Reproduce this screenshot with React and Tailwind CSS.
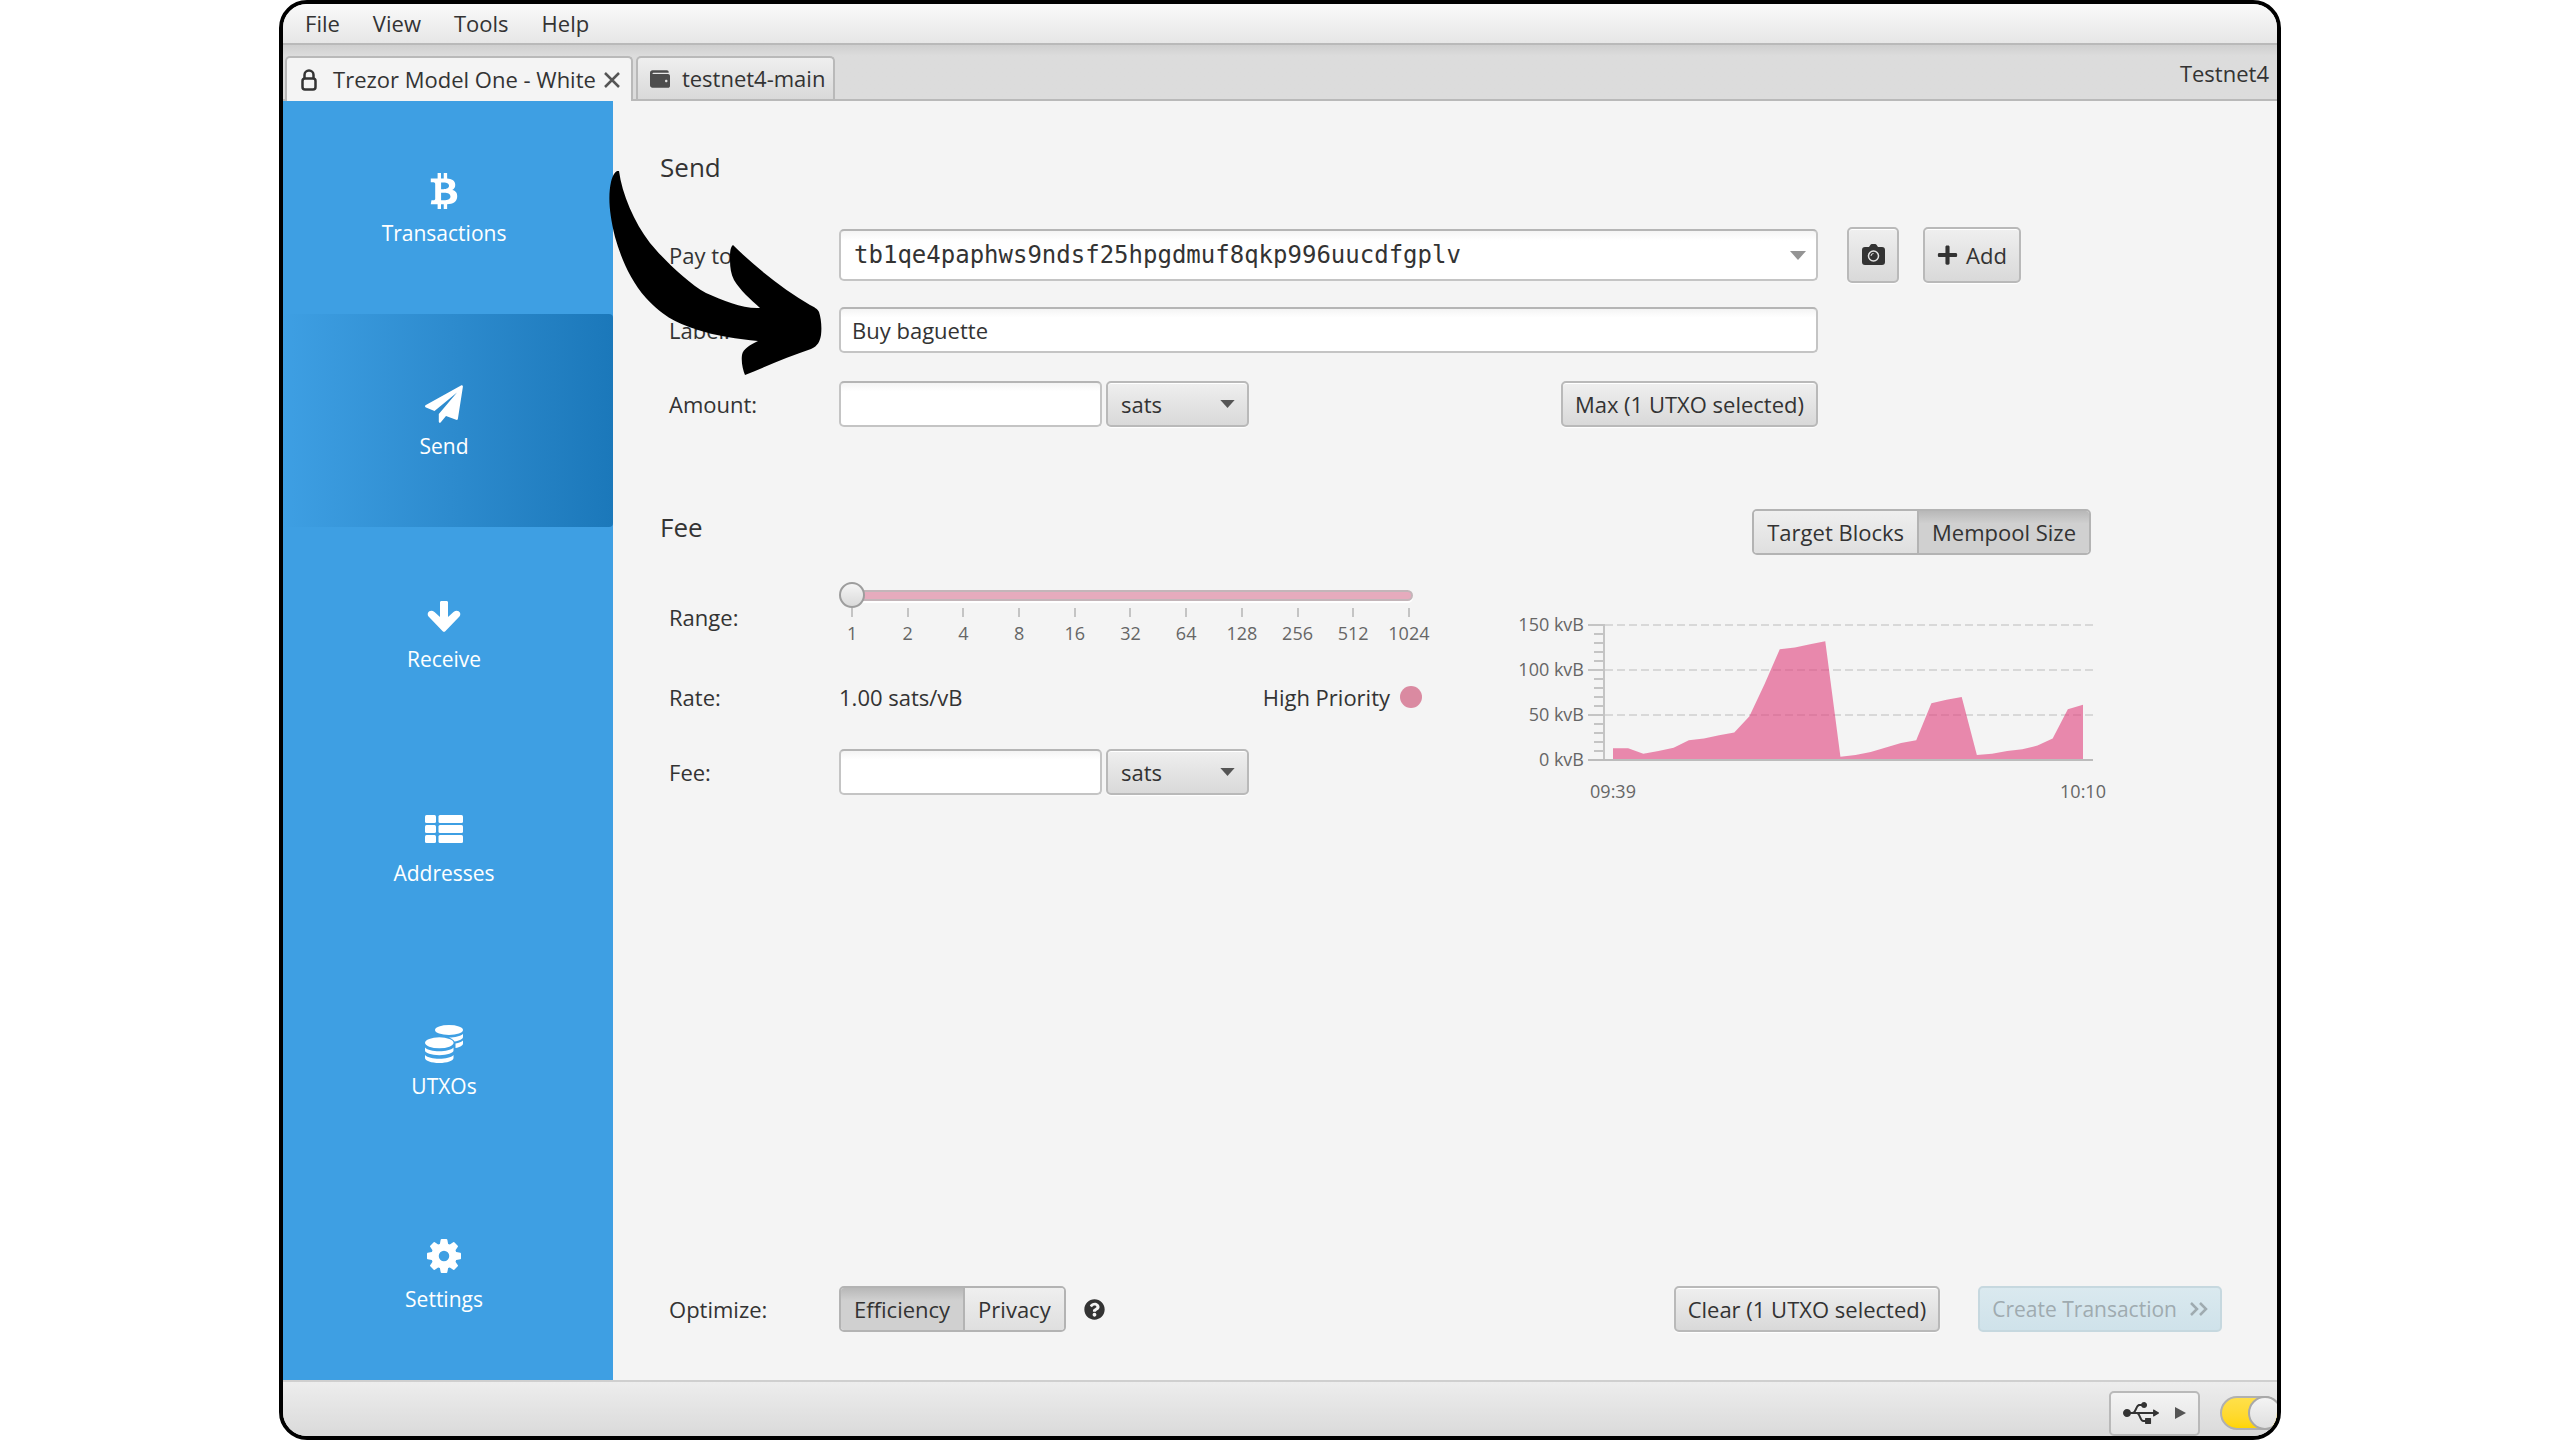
import { useState } from 'react'
import { FaBtc, FaPlus, FaQuestionCircle, FaUsb, FaWallet } from 'react-icons/fa'

const BUTTON = 'rounded-[5px] border-2 border-[#b9b9b9] bg-linear-to-b from-[#efefef] to-[#d9d9d9] text-[22px] leading-none text-[#333] shadow-[inset_0_1px_0_#fff,0_1px_1px_#fff]'
const FIELD = 'rounded-[5px] border-2 border-[#c4c4c4] border-t-[#b5b5b5] bg-linear-to-b from-[#f4f4f4] to-white to-20% text-[#333] outline-none'

const feeSteps = [1, 2, 4, 8, 16, 32, 64, 128, 256, 512, 1024]

// mempool size in kvB, one sample per minute
const mempool = [
  13, 13, 7, 10, 13.5, 22, 24, 27.5, 30.5, 48.5, 84.5, 123, 125, 128.5, 132, 3.5,
  5.5, 9, 14, 19, 22, 63, 67, 70, 5.5, 7, 10, 12, 16, 24, 56.5, 61.5,
]

function PlaneIcon() {
  return (
    <svg className="h-[38px] w-[38px]" viewBox="0 0 38 38" fill="currentColor">
      <path d="M37 .2c.7.2 1 .8.9 1.500l-5 32c-.2 1-.9 1.400-1.800 1.100L21 31l-5.200 6.300c-.8 1-2 .6-2-.700V29L32 7.500 9.500 26 1 22.500c-1.300-.6-1.300-1.700-.1-2.400L36 .4c.3-.2.700-.3 1-.2z" />
    </svg>
  )
}

function DownIcon() {
  return (
    <svg className="h-[38px] w-[34px]" viewBox="0 0 34 38" fill="currentColor">
      <path d="M14.500 3h5c1 0 1.500.600 1.500 1.500V19l5.500-5c2.500-2.200 5.500-1.500 6.500.800.600 1.500.2 3-.8 4L18.300 33.300c-.8.7-1.800.7-2.600 0L1.800 18.800c-1-1-1.400-2.500-.8-4C2 12.500 5 11.800 7.500 14l5.500 5V4.500c0-.9.5-1.500 1.500-1.500z" />
    </svg>
  )
}

function ListIcon() {
  return (
    <svg className="h-[38px] w-[38px]" viewBox="0 0 38 38" fill="currentColor">
      {[3, 13, 23].map((y) => (
        <g key={y}>
          <rect x="0" y={y} width="11" height="8" rx="1.500" />
          <rect x="13.500" y={y} width="24.500" height="8" rx="1.500" />
        </g>
      ))}
    </svg>
  )
}

function CoinsIcon() {
  return (
    <svg className="h-[38px] w-[38px]" viewBox="0 0 38 38" fill="currentColor">
      <ellipse cx="24" cy="5" rx="14" ry="5" />
      <path d="M38 9v3c0 2-3.500 3.700-8.500 4.500-1-1.700-3-3-5.500-4 6 0 11.500-1.300 14-3.500z" />
      <path d="M38 15.500v3c0 2-3 3.700-7.500 4.500v-4.500c3.500-.600 6-1.600 7.500-3z" />
      <ellipse cx="14.300" cy="17.800" rx="14.300" ry="5.500" />
      <path d="M0 22.500c2.500 2.500 8 3.800 14.300 3.800s11.800-1.300 14.200-3.800v3c0 2.500-6.300 4.700-14.200 4.700S0 28 0 25.500z" />
      <path d="M0 30c2.500 2.500 8 3.800 14.300 3.800s11.800-1.300 14.200-3.800v3c0 2.700-6.300 5-14.200 5S0 35.700 0 33z" />
    </svg>
  )
}

function GearIcon() {
  return (
    <svg className="h-[38px] w-[34px]" viewBox="-17 -18 34 38" fill="currentColor">
      <circle r="9" fill="none" stroke="currentColor" strokeWidth="7.500" />
      {[0, 45, 90, 135, 180, 225, 270, 315].map((a) => (
        <path key={a} d="M-4.300 -11l1-5.300q.2-.7.900-.7h4.800q.7 0 .9.700l1 5.300z" transform={`rotate(${a})`} />
      ))}
    </svg>
  )
}

function Caret({ className }) {
  return (
    <svg className={className} viewBox="0 0 16 9" fill="currentColor">
      <path d="M0 0h16L8 9z" />
    </svg>
  )
}

const navItems = [
  { label: 'Transactions', icon: <FaBtc className="my-px h-9 w-[30px]" /> },
  { label: 'Send', icon: <PlaneIcon /> },
  { label: 'Receive', icon: <DownIcon /> },
  { label: 'Addresses', icon: <ListIcon /> },
  { label: 'UTXOs', icon: <CoinsIcon /> },
  { label: 'Settings', icon: <GearIcon /> },
]

function Sidebar() {
  return (
    <nav className="flex w-[330px] shrink-0 flex-col bg-[#3e9fe3]">
      {navItems.map((item) => (
        <button
          key={item.label}
          className={`flex flex-1 flex-col items-center justify-center gap-[9px] rounded-r-[4px] pt-1 pr-2 text-[21px] leading-7 text-white ${
            item.label === 'Send' ? 'bg-linear-to-r from-[#3e9fe3] to-[#1b78ba]' : ''
          }`}
        >
          {item.icon}
          {item.label}
        </button>
      ))}
    </nav>
  )
}

function TabBar() {
  return (
    <div className="flex h-14 shrink-0 items-end border-b-2 border-[#b9b9b9] bg-linear-to-b from-[#cfcfcf] to-[#dcdcdc] to-20%">
      <div className="z-10 -mb-[2px] ml-[2px] flex h-[45px] items-center gap-2 rounded-t-[5px] border-2 border-b-0 border-[#b9b9b9] bg-[#f4f4f4] pr-[11px] pl-[14px]">
        <svg className="mr-2 h-[22px] w-4" viewBox="0 0 16 22" fill="none" stroke="#333" strokeWidth="2.500">
          <rect x="1.500" y="9.500" width="13" height="11" rx="2.500" />
          <path d="M3.500 9.500V6a4.500 4.500 0 0 1 9 0v3.500" />
        </svg>
        <button>Trezor Model One - White</button>
        <button aria-label="Close tab">
          <svg className="h-4 w-4" viewBox="0 0 16 16" stroke="#555" strokeWidth="2.500">
            <path d="M1 1l14 14M15 1L1 15" />
          </svg>
        </button>
      </div>
      <button className="ml-[3px] flex h-[43px] items-center gap-3 rounded-t-[5px] border-2 border-b-0 border-[#b9b9b9] bg-linear-to-b from-[#efefef] to-[#d9d9d9] pr-2 pl-3">
        <FaWallet className="h-5 w-5 text-[#4d4d4d]" />
        testnet4-main
      </button>
      <span className="mr-2 mb-3 ml-auto leading-7">Testnet4</span>
    </div>
  )
}

function UnitSelect({ label }) {
  return (
    <div className="relative">
      <select aria-label={label} className={`h-[46px] w-[143px] appearance-none pl-[13px] ${BUTTON}`}>
        <option>sats</option>
        <option>BTC</option>
      </select>
      <Caret className="pointer-events-none absolute top-[19px] right-[14px] h-2 w-[15px] text-[#555]" />
    </div>
  )
}

function ToggleGroup({ options, initial }) {
  const [selected, setSelected] = useState(initial)

  return (
    <div className="flex overflow-hidden rounded-[5px] border-2 border-[#b3b3b3] text-[22px] leading-none">
      {options.map((option) => (
        <button
          key={option}
          aria-pressed={selected === option}
          onClick={() => setSelected(option)}
          className={`h-[42px] border-l-2 border-[#b3b3b3] px-[13px] first:border-l-0 ${
            selected === option
              ? 'bg-linear-to-b from-[#b8b8b8] to-[#d0d0d0] to-30%'
              : 'bg-linear-to-b from-[#efefef] to-[#dfdfdf]'
          }`}
        >
          {option}
        </button>
      ))}
    </div>
  )
}

function SendForm() {
  return (
    <div className="ml-[9px] grid grid-cols-[170px_minmax(0,979px)_auto] items-center">
      <label htmlFor="payTo">Pay to:</label>
      <div className="relative">
        <input
          id="payTo"
          defaultValue="tb1qe4paphws9ndsf25hpgdmuf8qkp996uucdfgplv"
          className={`h-[52px] w-full pr-10 pl-[13px] font-['DejaVu_Sans_Mono',monospace] text-[24px] ${FIELD}`}
        />
        <button aria-label="Choose payee" className="absolute inset-y-0 right-0 flex w-10 items-center justify-center">
          <Caret className="h-[9px] w-4 text-[#949494]" />
        </button>
      </div>
      <div className="flex pl-[29px]">
        <button aria-label="Scan QR code" className={`flex h-14 w-[52px] items-center justify-center ${BUTTON}`}>
          <svg className="h-[22px] w-[23px]" viewBox="0 0 23 22">
            <path d="M3 3h4l1.500-2.300Q9 0 9.800 0h3.400q.8 0 1.300.7L16 3h4q3 0 3 3v12q0 3-3 3H3q-3 0-3-3V6q0-3 3-3z" fill="#333" />
            <circle cx="11.500" cy="12" r="5" fill="none" stroke="#e4e4e4" strokeWidth="1.500" />
            <path d="M9 12a2.500 2.500 0 0 1 2.500-2.500" fill="none" stroke="#e4e4e4" />
          </svg>
        </button>
        <button className={`ml-6 flex h-14 items-center gap-2 px-3 ${BUTTON}`}>
          <FaPlus className="h-[22px] w-[21px]" />
          Add
        </button>
      </div>

      <label htmlFor="label" className="mt-6">Label:</label>
      <input id="label" defaultValue="Buy baguette" className={`col-start-2 mt-6 h-[46px] w-full px-[11px] ${FIELD}`} />

      <label htmlFor="amount" className="col-start-1 mt-7">Amount:</label>
      <div className="mt-7 flex">
        <input id="amount" className={`mr-1 h-[46px] w-[263px] px-[11px] ${FIELD}`} />
        <UnitSelect label="Amount unit" />
        <button className={`ml-auto h-[46px] px-3 ${BUTTON}`}>Max (1 UTXO selected)</button>
      </div>
    </div>
  )
}

function FeeForm() {
  return (
    <div className="ml-[9px] grid w-[753px] shrink-0 grid-cols-[170px_minmax(0,1fr)] content-start items-center pt-[27px]">
      <label htmlFor="range" className="mt-2">Range:</label>
      <div>
        <div className="relative h-[26px]">
          <div className="absolute inset-x-[9px] top-[8px] h-[11px] rounded-full border-2 border-[#c3b5b9] bg-[#e6abbd] shadow-[0_2px_0_#fff]" />
          <input
            id="range"
            type="range"
            min="0"
            max="10"
            defaultValue="0"
            className="absolute inset-0 w-full appearance-none bg-transparent [&::-webkit-slider-thumb]:size-[26px] [&::-webkit-slider-thumb]:appearance-none [&::-webkit-slider-thumb]:rounded-full [&::-webkit-slider-thumb]:border-2 [&::-webkit-slider-thumb]:border-[#9d9d9d] [&::-webkit-slider-thumb]:bg-linear-to-b [&::-webkit-slider-thumb]:from-[#f5f5f5] [&::-webkit-slider-thumb]:to-[#dadada]"
          />
        </div>
        <div className="flex justify-between px-3">
          {feeSteps.map((step) => (
            <div key={step} className="flex w-[2px] flex-col items-center text-[18px] leading-6 text-[#666]">
              <span className="h-[9px] w-[2px] bg-[#c4c4c4]" />
              <span className="mt-1">{step}</span>
            </div>
          ))}
        </div>
      </div>

      <span className="mt-[38px] leading-7">Rate:</span>
      <div className="mt-[38px] flex items-center leading-7">
        <span>1.00 sats/vB</span>
        <span className="ml-auto">High Priority</span>
        <span className="ml-[10px] size-[22px] rounded-full bg-[#da8aa1]" />
      </div>

      <label htmlFor="fee" className="mt-[38px]">Fee:</label>
      <div className="mt-[38px] flex">
        <input id="fee" className={`mr-1 h-[46px] w-[263px] px-[11px] ${FIELD}`} />
        <UnitSelect label="Fee unit" />
      </div>
    </div>
  )
}

function MempoolChart() {
  const x = (i) => 94 + (i * 470) / (mempool.length - 1)
  const y = (v) => 150 - (v * 135) / 150
  const points = mempool.map((v, i) => `${x(i)},${y(v)}`).join(' ')

  return (
    <svg className="h-[200px] w-[590px]" viewBox="0 0 590 200" fill="#666" fontSize="18">
      {[0, 50, 100, 150].map((v) => (
        <g key={v}>
          {v > 0 && <line x1="86" x2="574" y1={y(v)} y2={y(v)} stroke="#d8d8d8" strokeWidth="2" strokeDasharray="8 4" />}
          <line x1="69" x2="86" y1={y(v)} y2={y(v)} stroke="#c4c4c4" strokeWidth="2" />
          <text x="65" y={y(v) + 6} textAnchor="end">{v} kvB</text>
        </g>
      ))}
      {Array.from({ length: 15 }, (_, i) => (
        <line key={i} x1="75" x2="86" y1={y(i * 10)} y2={y(i * 10)} stroke="#c4c4c4" strokeWidth="2" />
      ))}
      <polygon points={`94,150 ${points} 564,150`} fill="#e0457f" fillOpacity="0.62" />
      <line x1="85" x2="85" y1="14" y2="151" stroke="#c4c4c4" strokeWidth="2" />
      <line x1="69" x2="574" y1="150" y2="150" stroke="#bcbcbc" strokeWidth="2" />
      <text x="94" y="188" textAnchor="middle">09:39</text>
      <text x="564" y="188" textAnchor="middle">10:10</text>
    </svg>
  )
}

function StatusBar() {
  return (
    <footer className="flex h-14 shrink-0 items-center justify-end border-t-2 border-[#cfcfcf] bg-linear-to-b from-[#ededed] to-[#dadada]">
      <button aria-label="USB devices" className="mt-2 flex h-[45px] w-[91px] items-center justify-between rounded-[5px] border-2 border-[#b9b9b9] bg-linear-to-b from-[#f4f4f4] to-[#e2e2e2] px-3">
        <FaUsb className="h-9 w-9" />
        <svg className="h-3 w-[11px]" viewBox="0 0 11 12" fill="#555">
          <path d="M0 0l11 6L0 12z" />
        </svg>
      </button>
      <label className="mt-2 -mr-[5px] ml-5 flex h-[34px] w-[62px] justify-end rounded-full border-2 border-[#b0b0b0] bg-linear-to-b from-[#ffe04a] to-[#ffd500]">
        <input type="checkbox" defaultChecked aria-label="Connected" className="sr-only" />
        <span className="-my-[2px] -mr-[2px] size-[34px] rounded-full border-2 border-[#a8a8a8] bg-linear-to-b from-[#f4f4f4] to-[#dfdfdf]" />
      </label>
    </footer>
  )
}

export default function App() {
  return (
    <div className="h-screen bg-white px-[10.9%] font-['Open_Sans','Noto_Sans',sans-serif] text-[22px] text-[#333]">
      <div className="flex h-full flex-col overflow-hidden rounded-[28px] border-4 border-black bg-[#f4f4f4]">
        {/* Menu */}
        <div className="flex h-[41px] shrink-0 items-center gap-[33px] border-b-2 border-[#b9b9b9] bg-linear-to-b from-[#fafafa] to-[#e6e6e6] pl-[22px]">
          <button>File</button>
          <button>View</button>
          <button>Tools</button>
          <button>Help</button>
        </div>

        <TabBar />

        <div className="relative flex min-h-0 flex-1">
          <Sidebar />

          <main className="flex min-w-0 flex-1 flex-col pt-[50px] pr-[55px] pb-12 pl-[47px]">
            <h1 className="mb-11 text-[26px] leading-8">Send</h1>
            <SendForm />

            <div className="mt-[82px] flex max-w-[1431px] justify-between">
              <h2 className="text-[26px] leading-9">Fee</h2>
              <ToggleGroup options={['Target Blocks', 'Mempool Size']} initial="Mempool Size" />
            </div>
            <div className="flex">
              <FeeForm />
              <div className="mt-[55px] ml-[97px]">
                <MempoolChart />
              </div>
            </div>

            <div className="mt-auto ml-[9px] flex items-center">
              <span className="w-[170px]">Optimize:</span>
              <ToggleGroup options={['Efficiency', 'Privacy']} initial="Efficiency" />
              <FaQuestionCircle className="ml-[18px] size-[21px]" />
              <button className={`ml-auto h-[46px] px-3 ${BUTTON}`}>Clear (1 UTXO selected)</button>
              <button disabled className="ml-[38px] flex h-[46px] items-center gap-3 rounded-[5px] border-2 border-[#c6d8df] bg-linear-to-b from-[#dae9ef] to-[#cfe2ea] px-3 text-[21px] leading-none text-[#9fabb0]">
                Create Transaction
                <svg className="h-[14px] w-[19px]" viewBox="0 0 19 14" fill="none" stroke="currentColor" strokeWidth="2.500">
                  <path d="M2 1l6 6-6 6M11 1l6 6-6 6" />
                </svg>
              </button>
            </div>
          </main>

          {/* Arrow pointing at the label field */}
          <svg className="pointer-events-none absolute top-[70px] left-[326px] h-[205px] w-[213px]" viewBox="609 171 213 205">
            <path d="M619 171C616 170 613 174 611 182C608 196 609 212 615 237C621 258 630 280 646 298C664 318 680 324 698 330C716 336 738 339 758 341C750 345 743 349 742 355C741 362 743 370 745 375C767 366 790 356 811 349C818 346 820 341 821 335C822 327 821 318 819 312C818 309 814 307 810 305C785 290 757 269 733 245C730 247 730 254 730 260C730 268 731 274 734 280C740 290 750 299 760 308C743 309 724 301 706 293C688 283 664 260 650 243C634 222 622 194 619 171Z" />
          </svg>
        </div>

        <StatusBar />
      </div>
    </div>
  )
}
